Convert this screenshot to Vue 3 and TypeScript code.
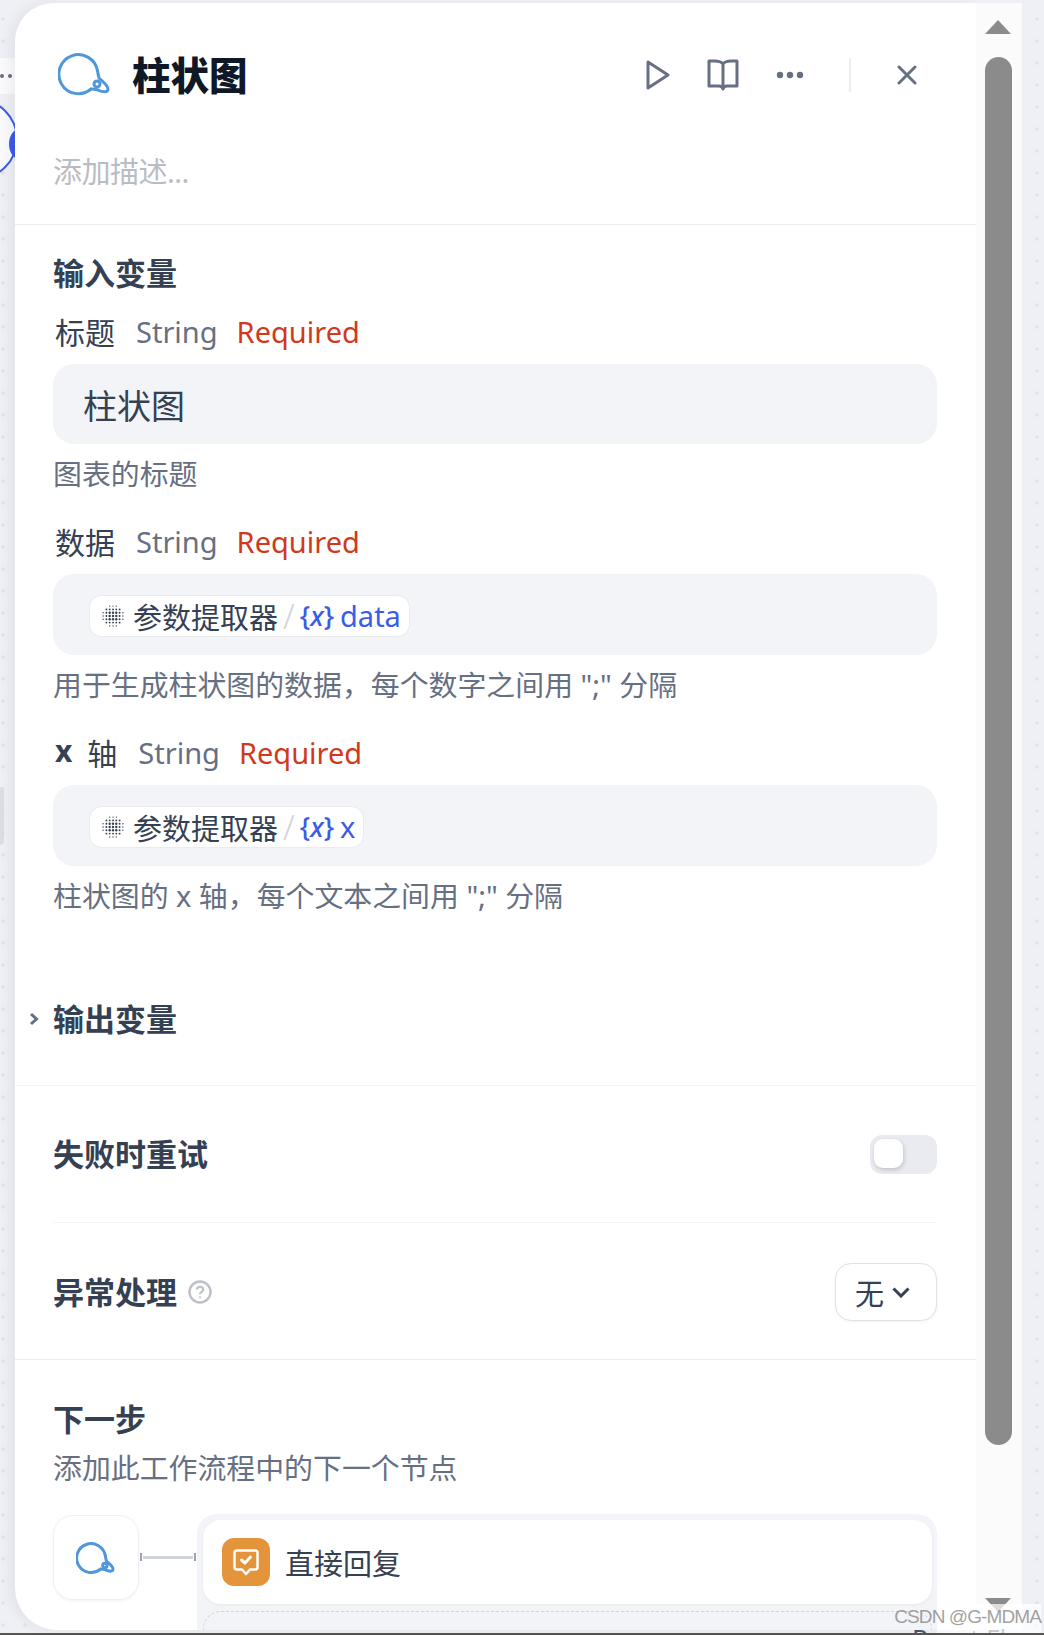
<script setup lang="ts">
interface Field {
  name: string
  prefix?: string
  kind: 'text' | 'ref'
  value: string
  hint: string
}

const fields: Field[] = [
  { name: '标题', kind: 'text', value: '柱状图', hint: '图表的标题' },
  { name: '数据', kind: 'ref', value: 'data', hint: '用于生成柱状图的数据，每个数字之间用 ";" 分隔' },
  { name: '轴', prefix: 'x', kind: 'ref', value: 'x', hint: '柱状图的 x 轴，每个文本之间用 ";" 分隔' },
]

// dotted round glyph of the parameter extractor node
const dots: { x: number; y: number; r: number }[] = []
for (let i = -3; i <= 3; i++) {
  for (let j = -3; j <= 3; j++) {
    const d = Math.hypot(i, j)
    if (d > 3.3) continue
    dots.push({ x: 11 + i * 3.3, y: 11 + j * 3.3, r: d < 1.5 ? 1.2 : d < 3 ? 0.95 : 0.7 })
  }
}
</script>

<template>
  <div class="page">
    <div class="canvas-node"><i /><i /></div>
    <div class="canvas-ring" />
    <div class="canvas-handle" />
    <div class="canvas-strip" />

    <div class="window">
      <div class="panel">
        <header class="head">
          <svg class="tool-icon" width="54" height="46" viewBox="0 0 54 46" fill="none" stroke="#4f97d9" stroke-width="3" stroke-linecap="round">
            <path d="M39.600 20A19.500 19.500 0 1 0 33 38" />
            <path d="M39.600 20C40 23 40.500 25 41 27C44 30 50 34 50 38C50 42 44 41 40 39C37 38 35 38 33 38" />
            <circle cx="39" cy="33" r="3" />
          </svg>
          <h1 class="title">柱状图</h1>
          <div class="actions">
            <svg width="24" height="30" viewBox="0 0 24 30" fill="none" stroke="#676f83" stroke-width="3" stroke-linejoin="round">
              <path d="M2 2L22 15L2 28Z" />
            </svg>
            <svg width="32" height="32" viewBox="0 0 32 32" fill="none" stroke="#676f83" stroke-width="3" stroke-linejoin="round" stroke-linecap="round">
              <path d="M16 5C14 2.500 11 2 8 2H2V27H12C14 27 15.500 28 16 30C16.500 28 18 27 20 27H30V2H24C21 2 18 2.500 16 5V30" />
            </svg>
            <svg class="more" width="28" height="8" viewBox="0 0 28 8" fill="#676f83">
              <circle cx="4" cy="4" r="3.200" />
              <circle cx="14" cy="4" r="3.200" />
              <circle cx="24" cy="4" r="3.200" />
            </svg>
            <span class="sep" />
            <svg width="20" height="20" viewBox="0 0 20 20" fill="none" stroke="#676f83" stroke-width="3" stroke-linecap="round">
              <path d="M2 2L18 18M18 2L2 18" />
            </svg>
          </div>
        </header>
        <p class="desc">添加描述...</p>

        <section class="inputs">
          <h2 class="group-title">输入变量</h2>
          <div v-for="f in fields" :key="f.name" class="field">
            <div class="field-label">
              <span class="field-name"><b v-if="f.prefix">{{ f.prefix }}</b>{{ f.name }}</span>
              <span class="field-type">String</span>
              <span class="field-req">Required</span>
            </div>
            <div class="field-box">
              <span v-if="f.kind === 'text'" class="box-text">{{ f.value }}</span>
              <span v-else class="chip">
                <svg class="chip-dots" width="22" height="22" viewBox="0 0 22 22" fill="#354052">
                  <circle v-for="(d, i) in dots" :key="i" :cx="d.x" :cy="d.y" :r="d.r" />
                </svg>
                <span class="chip-node">参数提取器</span>
                <span class="chip-slash">/</span>
                <span class="chip-var">{<em>x</em>}</span>
                <span class="chip-value">{{ f.value }}</span>
              </span>
            </div>
            <p class="hint">{{ f.hint }}</p>
          </div>
        </section>

        <section class="outputs">
          <svg class="chevron" width="10" height="14" viewBox="0 0 10 14" fill="none" stroke="#676f83" stroke-width="3">
            <path d="M2 2L7.500 7L2 12" />
          </svg>
          <h2 class="group-title">输出变量</h2>
        </section>

        <section class="options">
          <div class="option option--retry">
            <h2 class="group-title">失败时重试</h2>
            <span class="toggle"><i /></span>
          </div>
          <div class="option option--error">
            <h2 class="group-title">异常处理</h2>
            <svg class="help" width="24" height="24" viewBox="0 0 24 24" fill="none" stroke="#bcc0c8" stroke-width="2.400">
              <circle cx="12" cy="12" r="10.500" />
              <path d="M8.800 9.500C9 7.500 10.500 6.800 12 6.800C14 6.800 15.300 8 15.300 9.600C15.300 11.800 12 11.800 12 14.200" stroke-width="2.200" />
              <circle cx="12" cy="17.300" r="1.100" fill="#bcc0c8" stroke="none" />
            </svg>
            <span class="select">
              无
              <svg width="18" height="11" viewBox="0 0 18 11" fill="none" stroke="#354052" stroke-width="3">
                <path d="M1.500 1.500L9 9L16.500 1.500" />
              </svg>
            </span>
          </div>
        </section>

        <section class="next">
          <h2 class="group-title">下一步</h2>
          <p class="hint hint--next">添加此工作流程中的下一个节点</p>
          <div class="next-flow">
            <div class="next-source">
              <svg width="40" height="36" viewBox="0 0 54 46" fill="none" stroke="#4f97d9" stroke-width="4" stroke-linecap="round">
                <path d="M39.600 20A19.500 19.500 0 1 0 33 38" />
                <path d="M39.600 20C40 23 40.500 25 41 27C44 30 50 34 50 38C50 42 44 41 40 39C37 38 35 38 33 38" />
                <circle cx="39" cy="33" r="3" />
              </svg>
            </div>
            <div class="connector"><i /><b /><i /></div>
            <div class="next-group">
              <div class="next-card">
                <span class="reply-icon">
                  <svg width="26" height="27" viewBox="0 0 26 27" fill="none" stroke="#fff" stroke-width="2.500" stroke-linejoin="round" stroke-linecap="round">
                    <path d="M4 1.500H22C23.400 1.500 24.500 2.600 24.500 4V18C24.500 19.400 23.400 20.500 22 20.500H17L13 25L9 20.500H4C2.600 20.500 1.500 19.400 1.500 18V4C1.500 2.600 2.600 1.500 4 1.500Z" />
                    <path d="M8.500 11L12 14L17.500 8" stroke-width="3" />
                  </svg>
                </span>
                <span class="reply-text">直接回复</span>
              </div>
              <div class="next-add" />
            </div>
          </div>
        </section>
      </div>

      <aside class="scrollbar">
        <span class="arrow arrow--up" />
        <span class="thumb" />
        <span class="arrow arrow--down" />
      </aside>
    </div>

    <div class="bottom-bar" />
    <div class="flow-label">React Flow</div>
    <div class="watermark">CSDN @G-MDMA</div>
  </div>
</template>

<style scoped>
.page {
  position: relative;
  width: 1044px;
  height: 1635px;
  overflow: hidden;
  padding: 3px 0 0 15px;
  box-sizing: border-box;
  background-color: #eff0f5;
  background-image: radial-gradient(circle, #e2e4ea 1.5px, transparent 2px);
  background-size: 22px 22px;
  background-position: -8px 8px;
  font-family: "Noto Sans", "Noto Sans CJK SC", sans-serif;
  color: #354052;
}

.canvas-node {
  position: absolute;
  left: 0;
  top: 58px;
  width: 15px;
  height: 36px;
  background: #fafafc;
  display: flex;
  gap: 4px;
  align-items: center;
}

.canvas-node i {
  width: 4px;
  height: 4px;
  border-radius: 50%;
  background: #676f83;
}

.canvas-ring {
  position: absolute;
  left: -66px;
  top: 98px;
  width: 80px;
  height: 78px;
  border: 2px solid #3a5ce6;
  border-radius: 50%;
  background: #fafafc;
}

.canvas-handle {
  position: absolute;
  left: 9px;
  top: 128px;
  width: 24px;
  height: 32px;
  border-radius: 50%;
  background: #3a5ce6;
}

.canvas-strip {
  position: absolute;
  left: -8px;
  top: 787px;
  width: 12px;
  height: 58px;
  border-radius: 4px;
  background: #dcdee3;
}

.window {
  position: relative;
  display: flex;
  width: 1007px;
  height: 1627px;
}

.panel {
  display: flex;
  flex-direction: column;
  width: 961px;
  height: 100%;
  overflow: hidden;
  background: #fff;
  border-radius: 38px 0 0 42px;
  box-shadow: -6px 0 12px rgba(16, 24, 40, 0.05);
}

.head {
  display: flex;
  align-items: center;
  flex: none;
  height: 50px;
  margin-top: 46px;
  padding: 0 59px 0 43px;
}

.title {
  margin: -2px 0 0 20px;
  font-size: 38.500px;
  font-weight: 900;
  color: #101828;
}

.actions {
  display: flex;
  align-items: center;
  gap: 37px;
  margin: 2px 0 0 auto;
}

.more {
  margin-right: 8px;
}

.sep {
  width: 2px;
  height: 34px;
  background: #eceef1;
  margin-right: 9px;
}

.desc {
  flex: none;
  margin: 50px 0 0;
  padding: 0 38px 29px;
  height: 46px;
  font-size: 29px;
  line-height: 46px;
  letter-spacing: -0.500px;
  color: #b9bcc3;
  border-bottom: 1px solid #eaecf0;
}

.inputs {
  flex: none;
  padding: 28px 39px 0 38px;
}

.group-title {
  margin: 0;
  height: 40px;
  font-size: 31px;
  line-height: 40px;
  font-weight: 700;
  color: #354052;
}

.field {
  margin-bottom: 28px;
}

.field-label {
  display: flex;
  align-items: center;
  height: 38px;
  margin-top: 19px;
  padding-left: 2px;
  font-size: 29px;
}

.field + .field .field-label {
  margin-top: 0;
}

.field-name {
  display: flex;
  gap: 15px;
  font-size: 30px;
  color: #354052;
}

.field-name b {
  font-weight: 700;
}

.field-type {
  margin-left: 21px;
  color: #676f83;
}

.field-req {
  margin-left: 19px;
  color: #d0391b;
}

.field-box {
  display: flex;
  align-items: center;
  height: 81px;
  margin-top: 14px;
  padding: 0 37px;
  border-radius: 21px;
  background: #f2f4f7;
}

.field:first-of-type .field-box {
  height: 80px;
}

.box-text {
  margin-left: -7px;
  font-size: 34px;
  color: #354052;
}

.chip {
  display: inline-flex;
  align-items: center;
  height: 40px;
  margin-top: 2px;
  padding: 0 8px 0 12px;
  border-radius: 12px;
  background: #fff;
  box-shadow: 0 0 0 1px #eaecf0;
  font-size: 29px;
}

.chip-dots {
  flex: none;
}

.chip-node {
  margin-left: 9px;
  color: #354052;
}

.chip-slash {
  margin: 0 6px 0 5px;
  font-size: 34px;
  font-weight: 300;
  line-height: 1;
  color: #d0d5dc;
}

.chip-var {
  font-weight: 500;
  font-size: 27px;
  margin-left: -1px;
  color: #3a5ce6;
}

.chip-value {
  margin-left: 6px;
  color: #3a5ce6;
}

.hint {
  margin: 10px 0 0;
  height: 40px;
  font-size: 28.900px;
  line-height: 40px;
  color: #676f83;
}

.hint--next {
  margin-top: 9px;
}

.outputs {
  flex: none;
  position: relative;
  padding: 55px 38px 46px;
  border-bottom: 1px solid #f2f4f7;
}

.chevron {
  position: absolute;
  left: 14px;
  top: 68px;
}

.options {
  flex: none;
  padding: 0 39px 0 38px;
  border-bottom: 1px solid #eaecf0;
}

.option {
  display: flex;
  align-items: center;
}

.option--retry {
  padding: 48px 0 48px;
  border-bottom: 1px solid #f2f4f7;
}

.option--error {
  padding: 49px 0 47px;
}

.toggle {
  margin-left: auto;
  width: 67px;
  height: 39px;
  padding: 4px;
  box-sizing: border-box;
  border-radius: 12px;
  background: #e9ebf0;
}

.toggle i {
  display: block;
  width: 29px;
  height: 29px;
  border-radius: 9px;
  background: #fff;
  box-shadow: 1px 2px 4px rgba(16, 24, 40, 0.18);
}

.help {
  margin-left: 11px;
}

.select {
  display: flex;
  align-items: center;
  gap: 8px;
  box-sizing: border-box;
  width: 102px;
  height: 58px;
  margin: -9px 0 -9px auto;
  padding: 0 19px;
  border: 1px solid #e0e2e7;
  border-radius: 16px;
  background: #fff;
  box-shadow: 0 1px 3px rgba(16, 24, 40, 0.05);
  font-size: 29px;
  color: #354052;
}

.next {
  flex: 1;
  display: flex;
  flex-direction: column;
  min-height: 0;
  padding: 39px 39px 0 38px;
}

.next-flow {
  flex: 1;
  display: flex;
  align-items: flex-start;
  margin-top: 26px;
  min-height: 0;
}

.next-source {
  flex: none;
  display: flex;
  align-items: center;
  justify-content: center;
  box-sizing: border-box;
  width: 86px;
  height: 85px;
  margin-top: 1px;
  border: 1px solid #eff0f3;
  border-radius: 20px;
  background: #fff;
  box-shadow: 0 1px 3px rgba(16, 24, 40, 0.05);
}

.connector {
  flex: none;
  display: flex;
  align-items: center;
  width: 58px;
  height: 8px;
  margin-top: 39px;
}

.connector b {
  flex: 1;
  height: 3px;
  background: #d0d5dc;
}

.connector i {
  width: 2px;
  height: 8px;
  margin: 0 1px;
  background: #98a2b2;
}

.next-group {
  flex: 1;
  align-self: stretch;
  display: flex;
  flex-direction: column;
  padding: 6px 5px 0 6px;
  border-radius: 20px 20px 0 0;
  background: #f2f4f7;
}

.next-card {
  flex: none;
  display: flex;
  align-items: center;
  gap: 15px;
  height: 84px;
  padding-left: 19px;
  border-radius: 18px;
  background: #fff;
  box-shadow: 0 1px 3px rgba(16, 24, 40, 0.06);
}

.reply-icon {
  display: flex;
  align-items: center;
  justify-content: center;
  width: 48px;
  height: 48px;
  border-radius: 12px;
  background: #e4943a;
}

.reply-text {
  font-size: 29px;
  color: #354052;
}

.next-add {
  flex: 1;
  margin-top: 7px;
  border: 1px dashed #d0d5dc;
  border-bottom: 0;
  border-radius: 18px 18px 0 0;
}

.scrollbar {
  flex: none;
  display: flex;
  flex-direction: column;
  box-sizing: border-box;
  width: 46px;
  padding: 17px 0 0 9px;
  background: #fbfbfb;
}

.arrow {
  width: 0;
  height: 0;
  border-left: 13.500px solid transparent;
  border-right: 13.500px solid transparent;
}

.arrow--up {
  border-bottom: 14px solid #8b8b8b;
}

.arrow--down {
  margin-top: 153px;
  border-top: 14px solid #8b8b8b;
}

.thumb {
  width: 27px;
  height: 1388px;
  margin-top: 23px;
  border-radius: 14px;
  background: #8b8b8b;
}

.bottom-bar {
  height: 2px;
  margin: 3px 0 0 -15px;
  background: #555;
}

.flow-label {
  position: absolute;
  left: 912px;
  top: 1622px;
  height: 11px;
  overflow: hidden;
  font-size: 26px;
  line-height: 32px;
  color: #475467;
  white-space: nowrap;
}

.watermark {
  position: absolute;
  right: 3px;
  top: 1604px;
  box-sizing: border-box;
  width: 104px;
  height: 29px;
  padding-top: 2px;
  display: flex;
  justify-content: flex-end;
  align-items: flex-start;
  white-space: nowrap;
  background: rgba(255, 255, 255, 0.7);
  font-family: "Liberation Sans", sans-serif;
  font-size: 19px;
  letter-spacing: -0.900px;
  color: rgba(130, 130, 130, 0.75);
}
</style>
